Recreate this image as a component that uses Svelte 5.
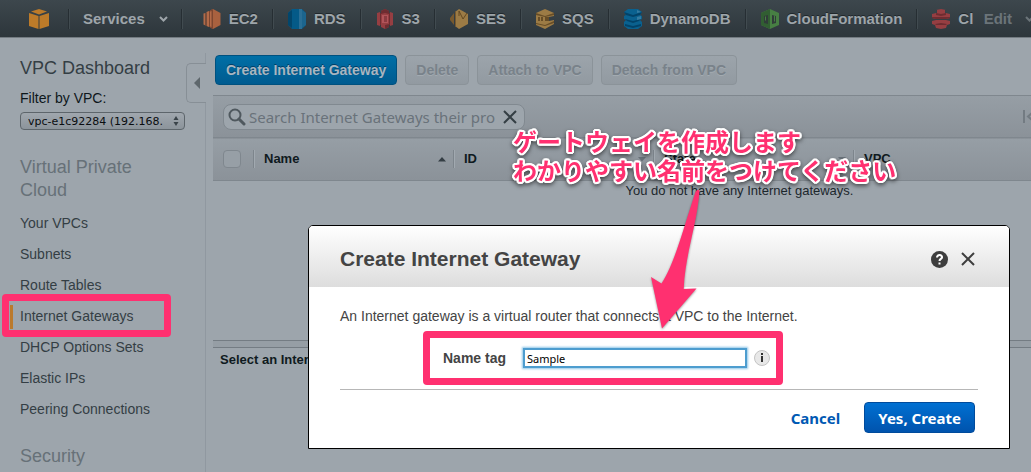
<script>
  const services = ['EC2', 'RDS', 'S3', 'SES', 'SQS', 'DynamoDB', 'CloudFormation', 'CloudFront'];
  const links = [
    'Your VPCs',
    'Subnets',
    'Route Tables',
    'Internet Gateways',
    'DHCP Options Sets',
    'Elastic IPs',
    'Peering Connections'
  ];
  const columns = [
    { name: 'Name', sort: 'up' },
    { name: 'ID', sort: 'down' },
    { name: 'State', sort: 'down' },
    { name: 'VPC', sort: 'down' },
  ];
  const actions = ['Delete', 'Attach to VPC', 'Detach from VPC'];
  let tag = $state('Sample');
</script>

{#snippet serviceIcon(name)}
  <svg class="service-icon" width="18" height="20" viewBox="0 0 18 20" aria-hidden="true">
    {#if name === 'EC2'}
      <path fill="#a9613f" d="M7 1.500 10 0l7.500 4v12L10 20l-3-1.500z" />
      <path fill="#7d4630" d="M7 1.500 10 0v20l-3-1.500z" />
      <path fill="#b36a48" d="M3.500 3 6 2v16l-2.500-1zM.500 4.500 2.500 4v12.500L.500 15.500zM7 2.500l1.500-.500v16L7 17.500z" />
      <path fill="#7d4630" d="M2.500 4h1v13h-1zM6 2h1v16H6z" />
    {:else if name === 'RDS'}
      <path fill="#045a88" d="M0 4 4 0h10l4 4v12l-4 4H4l-4-4z" />
      <path fill="#02466c" d="M0 4 4 1v18l-4-3z" />
      <path fill="#2a6f96" d="M11 0h3v20h-3z" />
      <path fill="#1c658e" d="M14 1l4 3v12l-4 3z" />
    {:else if name === 'S3'}
      <path fill="#963e42" d="M1 4 4 3v14l-3-1zM17 4l-3-1v14l3-1zM9 0l4 2v16l-4 2-4-2V2z" />
      <path fill="#6e2c31" d="M4 4h1v12H4zM13 4h1v12h-1zM9 0l4 2v3L9 4 5 5V2zM9 20l4-2v-3l-4 1z" />
      <path fill="#b1545a" d="M6 6h6v8H6z" />
      <path fill="#8b3a40" d="M8 7h3v6H8z" />
    {:else if name === 'SES'}
      <path fill="#9c7b45" d="M9 0l9 5v10l-9 5-4-3V3z" />
      <path fill="#77592f" d="M0 9l4-5v12l-4-5zM5 3l1-1v16l-1-1z" />
      <path fill="none" stroke="#634922" d="M9 2l4 8 4-6M9 2v5" />
    {:else if name === 'SQS'}
      <path fill="#9c7b45" d="M9 0l9 4v3l-5 1v4l5-1v4l-9 5-9-4V4z" />
      <path fill="#674d27" d="M0 4l9 3 9-3v2L9 8 0 6zM0 14l9 2 9-4v2l-9 3-9-2zM9 8h4v4H9z" />
      <path fill="#674d27" d="M2 8h2v4H2zM5 8h2v4H5z" />
    {:else if name === 'DynamoDB'}
      <path fill="#0a618f" d="M4 0h10l4 3-2 3 2 1v3l-2 1 2 2v4l-4 3H4l-4-3v-4l2-2-2-1V7l2-1-2-3z" />
      <path fill="#024369" d="M0 3l9 3 9-3-2 3-7 2-7-2zM1 10l8 2 8-2-2 2-6 2-6-2zM1 15l8 2 8-2v2l-8 2-8-2z" />
      <path fill="#347ba0" d="M13 1l4 2-4 1zM13 8l4-1v3l-4 1z" />
    {:else if name === 'CloudFormation'}
      <path fill="#477f43" d="M9 0l9 4v12l-9 4-9-4V4z" />
      <path fill="#315e32" d="M9 0v20l-9-4V4z" />
      <path fill="#303c39" d="M3 7l4-1v9l-4-1zM11 6l4 1v7l-4 1z" />
      <path fill="#477f43" d="M4 8l1-1v5l-1-1zM13 6l1 1v5l-1 1z" />
    {:else}
      <path fill="#963e42" d="M4 1l5-1 5 1v3l4 1v4l-4 1H4L0 9V5l4-1zM0 12l4-1h10l4 1v3l-3 1-1 3-5 1-5-1-1-3-3-1z" />
      <path fill="#6e2c31" d="M4 4l5 1 5-1v2l-5 1-5-1zM0 8h18v1l-4 1H4L0 9zM3 15l6-1 6 1-1 1H4z" />
      <path fill="#364046" d="M4 1h1v3H4zM13 1h1v3h-1z" />
    {/if}
  </svg>
{/snippet}

<div class="console">
  <nav class="topbar">
    <a class="home" href="#home" aria-label="Console home">
      <svg width="20" height="20" viewBox="0 0 20 20">
        <path fill="#bd7b29" d="M10 0l8 2.500L10 5.500 2 2.500zM0 4l9.500 3v13L0 17zM20 4l-9.500 3v13L20 17z" />
      </svg>
    </a>
    <button class="services" type="button">
      Services
      <svg width="9" height="6" viewBox="0 0 9 6"><path class="chevron" d="M1 1l3.500 3.500L8 1" /></svg>
    </button>
    <ul class="shortcuts">
      {#each services as name}
        <li><a href="#{name}">{@render serviceIcon(name)}{name}</a></li>
      {/each}
    </ul>
    <button class="edit" type="button">
      Edit
      <svg width="9" height="6" viewBox="0 0 9 6"><path class="chevron" d="M1 1l3.500 3.500L8 1" /></svg>
    </button>
  </nav>

  <div class="body">
    <aside>
      <button class="collapse" type="button" aria-label="Collapse sidebar">
        <svg width="6" height="12" viewBox="0 0 6 12"><path fill="#5e676c" d="M6 0v12L0 6z" /></svg>
      </button>
      <h1>VPC Dashboard</h1>
      <label class="filter-label" for="vpc">Filter by VPC:</label>
      <div class="picker">
        <select id="vpc"><option>vpc-e1c92284 (192.168.</option></select>
        <svg width="6" height="10" viewBox="0 0 6 10"><path fill="#3a4349" d="M3 0l2.500 4h-5zM3 10L.500 6h5z" /></svg>
      </div>
      <h2>Virtual Private Cloud</h2>
      <ul class="links">
        {#each links as link}
          <li class:current={link === 'Internet Gateways'}><a href="#vpc">{link}</a></li>
        {/each}
      </ul>
      <h2>Security</h2>
    </aside>

    <main>
      <div class="actions">
        <button class="action primary" type="button">Create Internet Gateway</button>
        {#each actions as action}
          <button class="action" type="button" disabled>{action}</button>
        {/each}
      </div>
      <div class="listing">
        <div class="toolbar">
          <div class="search">
            <svg width="18" height="18" viewBox="0 0 18 18"><circle cx="7" cy="7" r="5.500" fill="none" stroke="#4f585e" stroke-width="2" /><path d="M11 11l5 5" stroke="#4f585e" stroke-width="3" stroke-linecap="round" /></svg>
            <input type="text" aria-label="Search" placeholder="Search Internet Gateways their pro" />
            <button type="button" aria-label="Clear search">
              <svg width="14" height="14" viewBox="0 0 14 14"><path d="M1 1l12 12M13 1L1 13" stroke="#343e44" stroke-width="2" /></svg>
            </button>
          </div>
          <svg class="first" width="14" height="14" viewBox="0 0 14 14"><path d="M1 0v13M10 2L5 6.500l5 4.500" fill="none" stroke="#737b82" stroke-width="2" /></svg>
        </div>
        <table>
          <thead>
            <tr>
              <th class="check"><input type="checkbox" aria-label="Select all" /></th>
              {#each columns as column}
                <th class="column">
                  <div class="heading">
                    {column.name}
                    <svg width="8" height="5" viewBox="0 0 8 5">
                      <path fill={column.sort === 'up' ? '#343e44' : '#69727a'} d={column.sort === 'up' ? 'M4 0l4 4.500H0z' : 'M0 0h8L4 4.500z'} />
                    </svg>
                  </div>
                </th>
              {/each}
              <th></th>
            </tr>
          </thead>
          <tbody>
            <tr><td colspan="6">You do not have any Internet gateways.</td></tr>
          </tbody>
        </table>
      </div>
      <div class="splitter"></div>
      <p class="details">Select an Internet</p>
    </main>
  </div>

  <div class="dialog" role="dialog" aria-labelledby="dialog-title">
    <header>
      <h3 id="dialog-title">Create Internet Gateway</h3>
      <button type="button" aria-label="Help">
        <svg width="17" height="17" viewBox="0 0 17 17">
          <circle cx="8.500" cy="8.500" r="8.500" fill="#3e3e3e" />
          <path d="M6 6.500c0-3.500 5.500-3 5 0C10.800 8 8.500 8 8.500 10" fill="none" stroke="#fff" stroke-width="2" />
          <path d="M7.500 11.500h2v2h-2z" fill="#fff" />
        </svg>
      </button>
      <button type="button" aria-label="Close">
        <svg width="14" height="14" viewBox="0 0 14 14"><path d="M1 1l12 12M13 1L1 13" stroke="#3e3e3e" stroke-width="2" /></svg>
      </button>
    </header>
    <div class="content">
      <p>An Internet gateway is a virtual router that connects a VPC to the Internet.</p>
      <div class="field">
        <label for="tag">Name tag</label>
        <input id="tag" type="text" bind:value={tag} />
        <svg width="16" height="16" viewBox="0 0 16 16" aria-hidden="true">
          <circle cx="8" cy="8" r="7.500" fill="#e8e8e8" stroke="#c4c4c4" />
          <path d="M7 3h2v2H7zM7 6h2v6H7z" fill="#333" />
        </svg>
      </div>
      <footer>
        <button class="cancel" type="button">Cancel</button>
        <button class="confirm" type="button">Yes, Create</button>
      </footer>
    </div>
  </div>

  <p class="note">ゲートウェイを作成します<br />わかりやすい名前をつけてください</p>
  <svg class="arrow" width="56" height="148" viewBox="646 186 56 148" aria-hidden="true">
    <path fill="#ff3070" d="M699.500 191C697 225 685 255 683.700 289L696.500 288.500 662 328.500 651 277 661.500 283.500C675 263 684 226 695.500 192Q698 188 699.500 191z" />
  </svg>
</div>

<style>
  :global(body) { background: #9da5ac; }
  .console {
    position: relative;
    display: flex;
    flex-direction: column;
    height: 100vh;
    overflow: hidden;
    font: 14px/18px "Liberation Sans", Arial, sans-serif;
    color: #343e44;
  }
  .console * { box-sizing: border-box; }
  h1, h2, h3, p, ul { margin: 0; padding: 0; }
  h1, h2 { font-size: 18px; line-height: 23px; font-weight: 400; }
  ul { list-style: none; }
  a { color: inherit; text-decoration: none; }
  button { font: inherit; border: 0; padding: 0; background: none; color: inherit; cursor: pointer; }
  svg { flex: none; display: block; }

  .topbar {
    flex: none;
    display: flex;
    align-items: center;
    height: 38px;
    background: linear-gradient(#3d474d, #2d363b);
    border-bottom: 1px solid #737b81;
    color: #9ea5aa;
    font-size: 15px;
    font-weight: bold;
    text-shadow: 0 -1px #20272b;
  }
  .chevron { fill: none; stroke: currentColor; stroke-width: 2; }
  .home, .services, .shortcuts li { border-right: 1px solid #262e33; box-shadow: 1px 0 #414b50; height: 20px; }
  .home { padding: 0 19px 0 29px; }
  .services { display: flex; align-items: center; gap: 14px; padding: 0 13px 0 14px; }
  .shortcuts { flex: 1; display: flex; overflow: hidden; padding-left: 6px; }
  .shortcuts a { display: flex; align-items: center; gap: 8px; height: 20px; padding: 0 14px 0 15px; }
  .edit { flex: none; display: flex; align-items: center; gap: 13px; padding-left: 11px; margin-right: -3px; color: #6b7479; }

  .body { flex: 1; display: flex; min-height: 0; }
  aside { position: relative; flex: none; width: 206px; margin-top: 15px; padding: 4px 20px 0; border-right: 1px solid #9098a0; }
  .collapse {
    position: absolute;
    top: 10px;
    right: -1px;
    width: 20px;
    height: 40px;
    padding-left: 7px;
    border: 1px solid #878f96;
    border-right: 0;
    border-radius: 5px 0 0 5px;
    background: #9da5ac;
  }
  .filter-label { display: block; margin-top: 9px; color: #0e171b; }
  .picker { position: relative; width: 165px; margin-top: 5px; }
  select {
    display: block;
    width: 100%;
    height: 18px;
    padding: 0 7px;
    border: 1px solid #5d656b;
    border-radius: 4px;
    background: linear-gradient(#a0a7ae, #8c949b);
    appearance: none;
    font: 11px "DejaVu Sans", sans-serif;
    color: #0a0d10;
  }
  .picker svg { position: absolute; right: 6px; top: 4px; }
  h2 { margin-top: 26px; padding-right: 30px; color: #677178; }
  .links { margin-top: 6px; }
  .links li { position: relative; height: 31px; padding-top: 6px; }
  .links .current::before { content: ""; position: absolute; left: -10px; top: 4px; width: 3px; height: 24px; background: #bb7a2d; }
  .links .current::after { content: ""; position: absolute; inset: -7px 14px -5px -18px; border: 7px solid #ff3070; border-radius: 4px; }
  .links + h2 { margin-top: 20px; }

  main { flex: 1; min-width: 0; display: flex; flex-direction: column; padding: 17px 0 0 7px; }
  .actions { display: flex; gap: 8px; padding-left: 2px; }
  .action {
    height: 30px;
    padding: 0 10px;
    border: 1px solid #8b9399;
    border-radius: 4px;
    background: linear-gradient(#9ca4ab, #929aa1);
    color: #79828a;
    font-weight: bold;
    text-shadow: 0 1px #a3abb1;
  }
  .primary { background: linear-gradient(#006fa6, #005b90); border-color: #00517f; color: #a9b6c0; text-shadow: 0 -1px #003f68; }
  .listing { height: 245px; margin-top: 10px; overflow: hidden; }
  .toolbar {
    display: flex;
    align-items: center;
    justify-content: space-between;
    height: 42px;
    padding-left: 10px;
    border-top: 1px solid #7f878e;
    background: linear-gradient(#969ea5, #8b9299);
    overflow: hidden;
  }
  .search {
    display: flex;
    align-items: center;
    gap: 3px;
    width: 302px;
    height: 26px;
    padding: 0 7px 0 4px;
    border: 1px solid #818990;
    border-radius: 8px;
    background: #9da5ac;
  }
  .search input { flex: 1; min-width: 0; padding: 0; border: 0; background: none; outline: 0; font: 15px "Noto Sans", sans-serif; }
  .search input::placeholder { color: #69727a; }
  .first { margin-right: -6px; }
  table { width: 1053px; table-layout: fixed; border-collapse: collapse; font-size: 13px; }
  thead tr { height: 43px; background: linear-gradient(#969ea5, #8b9299); border: solid #7f878e; border-width: 1px 0; }
  th { padding: 0; text-align: left; color: #0f1a20; }
  .check { width: 40px; padding-left: 10px; }
  .column { width: 200px; }
  .check input { display: block; appearance: none; width: 18px; height: 18px; margin: 0; border: 1px solid #7f878e; border-radius: 4px; background: #979fa6; }
  .heading { display: flex; align-items: center; justify-content: space-between; height: 18px; padding: 0 7px 0 10px; border-left: 1px solid #7d858c; box-shadow: inset 1px 0 #a1a9b0; }
  td { padding: 1px 0; text-align: center; color: #1c272c; }
  .splitter { flex: none; height: 8px; border: solid #747c83; border-width: 1px 0; background: #969ea5; }
  .details { padding: 3px 7px; font-size: 13px; font-weight: bold; color: #0f1a20; }

  .dialog { position: absolute; top: 225px; left: 308px; right: 21px; border: 1px solid #000; border-radius: 5px 5px 0 0; background: #fff; color: #444; }
  header { display: flex; align-items: center; gap: 13px; height: 61px; padding: 5px 34px 0 31px; background: linear-gradient(#fff, #ddd); border-radius: 4px 4px 0 0; }
  h3 { flex: 1; font-size: 21px; line-height: 26px; }
  .content { padding: 20px 31px 15px; }
  .field {
    display: flex;
    align-items: center;
    width: 360px;
    height: 54px;
    margin: 6px 0 4px 83px;
    padding: 0 6px 0 13px;
    border: 7px solid #ff3070;
    border-radius: 4px;
  }
  .field label { flex: 1; font-weight: bold; }
  .field input { width: 224px; height: 20px; margin-right: 7px; padding: 0 2px; border: 2px solid #4d9dcf; outline: 0; box-shadow: 0 0 2px 1px #8fc6e8; color: #000; font: 11px "Noto Sans", sans-serif; }
  footer { display: flex; justify-content: flex-end; gap: 24px; padding: 12px 3px 0 0; border-top: 1px solid #b7b7b7; font: bold 15px "Noto Sans", sans-serif; }
  .cancel { color: #0059b3; }
  .confirm { height: 31px; padding: 0 13px; border: 1px solid #004b9c; border-radius: 4px; background: linear-gradient(#0070d2, #0053ad); color: #fff; }

  .note {
    position: absolute;
    top: 126px;
    left: 513px;
    font: bold 24px/29px "Noto Sans CJK JP", sans-serif;
    white-space: nowrap;
    color: #ff3070;
    text-shadow: 2px 0 #fff, -2px 0 #fff, 0 2px #fff, 0 -2px #fff, 2px 1px #fff, -2px 1px #fff, 2px -1px #fff, -2px -1px #fff,
      1px 2px #fff, -1px 2px #fff, 1px -2px #fff, -1px -2px #fff;
    filter: drop-shadow(0 2px 2px #0008);
  }
  .arrow { position: absolute; top: 186px; left: 646px; filter: drop-shadow(0 1px 1px #0006); }
</style>
